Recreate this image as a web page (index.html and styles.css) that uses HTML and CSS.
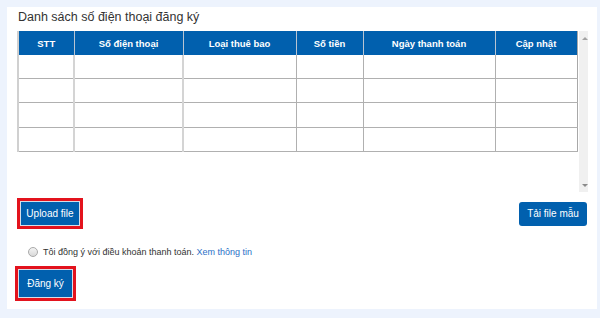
FILE: index.html
```html
<!DOCTYPE html>
<html lang="vi">
  <head>
    <meta charset="UTF-8" />
    <meta name="viewport" content="width=device-width, initial-scale=1.0" />
    <title>Đăng ký số điện thoại</title>
    <link rel="stylesheet" href="styles.css">
  </head>
  <body>
    <div class="panel">
      <h2 class="title">Danh sách số điện thoại đăng ký</h2>

      <div class="table-wrap">
        <table class="phone-table">
          <colgroup>
            <col style="width: 56px" />
            <col style="width: 109px" />
            <col style="width: 113px" />
            <col style="width: 67px" />
            <col style="width: 132px" />
            <col style="width: 82px" />
          </colgroup>
          <thead>
            <tr>
              <th>STT</th>
              <th>Số điện thoại</th>
              <th>Loại thuê bao</th>
              <th>Số tiền</th>
              <th>Ngày thanh toán</th>
              <th>Cập nhật</th>
            </tr>
          </thead>
          <tbody>
            <tr><td></td><td></td><td></td><td></td><td></td><td></td></tr>
            <tr><td></td><td></td><td></td><td></td><td></td><td></td></tr>
            <tr><td></td><td></td><td></td><td></td><td></td><td></td></tr>
            <tr><td></td><td></td><td></td><td></td><td></td><td></td></tr>
          </tbody>
        </table>
        <div class="scrollbar">
          <span class="arrow up"></span>
          <span class="arrow down"></span>
        </div>
      </div>

      <div class="actions">
        <div class="mark">
          <button class="btn">Upload file</button>
        </div>
        <button class="btn btn-round">Tải file mẫu</button>
      </div>

      <label class="agree">
        <span class="radio"></span>
        <span>Tôi đồng ý với điều khoản thanh toán. <a href="#">Xem thông tin</a></span>
      </label>

      <div class="mark mark-submit">
        <button class="btn btn-submit">Đăng ký</button>
      </div>
    </div>
  </body>
</html>
```

FILE: styles.css
```css
:root {
  --primary-color: #0160ae;
  --page-bg: #edf3fd;
  --mark-color: #e3131d;
  --text-color: #333333;
  --line-color: #b0b0b0;
}

body {
  margin: 0;
  padding: 0;
  background-color: var(--page-bg);
  font-family: "Liberation Sans", Arial, sans-serif;
  color: var(--text-color);
}

.panel {
  width: 571px;
  height: 301px;
  margin-left: 7px;
  padding: 0 9px 1px 10px;
  box-sizing: content-box;
  background-color: #ffffff;
}

.title {
  margin: 7px 0 4px 1px;
  font-size: 12.5px;
  line-height: 20px;
  font-weight: normal;
}

.table-wrap {
  display: flex;
  gap: 1px;
  height: 161px;
}

.phone-table {
  width: 559px;
  height: 121px;
  border-collapse: collapse;
  table-layout: fixed;
  border-left: 2px solid #d0d0d0;
  border-right: 1px solid #a8a8a8;
}

.phone-table th {
  height: 24px;
  padding: 0;
  background-color: var(--primary-color);
  color: #ffffff;
  font-size: 9.5px;
  font-weight: bold;
  border-left: 1px solid #b8c4d2;
}

.phone-table th:first-child {
  border-left: none;
}

.phone-table td {
  height: 23px;
  padding: 0;
  border-bottom: 1px solid var(--line-color);
  border-left: 2px solid #d4d4d4;
}

.phone-table td:first-child {
  border-left: none;
}

.phone-table td:nth-child(n + 4) {
  border-left: 1px solid var(--line-color);
}

.scrollbar {
  position: relative;
  width: 11px;
  background-color: #f0f0f0;
}

.arrow {
  position: absolute;
  left: 3px;
  width: 0;
  height: 0;
  border-left: 3px solid transparent;
  border-right: 3px solid transparent;
}

.arrow.up {
  top: 6px;
  border-bottom: 3px solid #a3a3a3;
}

.arrow.down {
  bottom: 5px;
  border-top: 3px solid #8a8a8a;
}

.actions {
  display: flex;
  justify-content: space-between;
  align-items: center;
  margin-top: 6px;
  padding-right: 1px;
}

.mark {
  display: inline-block;
  border: 3px solid var(--mark-color);
}

.btn {
  display: block;
  background-color: var(--primary-color);
  color: #ffffff;
  border: 1px solid #d6dde8;
  font-family: "Liberation Sans", Arial, sans-serif;
  font-size: 10px;
  width: 60px;
  height: 25px;
  padding: 0;
  cursor: pointer;
}

.btn-round {
  width: 68px;
  height: 24px;
  border: none;
  border-radius: 3px;
}

.agree {
  display: flex;
  align-items: center;
  height: 14px;
  margin: 16px 0 0 11px;
  font-size: 9px;
}

.radio {
  width: 8px;
  height: 8px;
  margin-right: 5px;
  border: 1px solid #a9a9a9;
  border-radius: 50%;
  background: linear-gradient(#f3f3f3, #d9d9d9);
}

.agree a {
  color: #2b6fc7;
  text-decoration: none;
}

.mark-submit {
  margin: 7px 0 0 -2px;
}

.btn-submit {
  width: 55px;
  height: 29px;
}
```
